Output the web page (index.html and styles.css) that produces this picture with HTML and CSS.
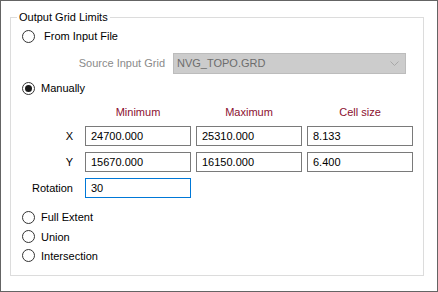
FILE: index.html
```html
<!DOCTYPE html>
<html>
<head>
<meta charset="utf-8">
<link rel="stylesheet" href="styles.css">
</head>
<body>
<div class="frame">
  <fieldset class="group">
    <legend class="legend">Output Grid Limits</legend>
    <div class="radio from-row"><span class="circle"></span><span class="rtext from-text">From Input File</span></div>
    <div class="source-row">
      <span class="source-label">Source Input Grid</span>
      <div class="combo"><span class="combo-text">NVG_TOPO.GRD</span>
        <svg class="chev" width="9" height="5" viewBox="0 0 9 5"><path d="M0.5 0.5 L4.5 4.5 L8.5 0.5" fill="none" stroke="#a8a8a8" stroke-width="1"/></svg>
      </div>
    </div>
    <div class="radio manual-row"><span class="circle checked"></span><span class="rtext">Manually</span></div>
    <div class="grid">
      <span></span><span class="hdr">Minimum</span><span class="hdr">Maximum</span><span class="hdr">Cell size</span>
      <span class="lbl">X</span><div class="input">24700.000</div><div class="input">25310.000</div><div class="input">8.133</div>
      <span class="lbl">Y</span><div class="input">15670.000</div><div class="input">16150.000</div><div class="input">6.400</div>
      <span class="lbl">Rotation</span><div class="input focus">30</div>
    </div>
    <div class="bottom-radios">
      <div class="radio r20"><span class="circle"></span><span class="rtext">Full Extent</span></div>
      <div class="radio r19"><span class="circle"></span><span class="rtext">Union</span></div>
      <div class="radio r19"><span class="circle"></span><span class="rtext">Intersection</span></div>
    </div>
  </fieldset>
</div>
</body>
</html>
```

FILE: styles.css
```css
html, body {
  margin: 0;
  padding: 0;
  background: #ffffff;
}
body {
  font-family: "Liberation Sans", Arial, sans-serif;
  font-size: 11px;
  color: #000000;
}
.frame {
  width: 438px;
  height: 292px;
  box-sizing: border-box;
  border: 1px solid #646464;
  padding: 9px 13px 0 9px;
  background: #ffffff;
}
.group {
  margin: 0;
  padding: 0 0 10px 6px;
  border: 1px solid #dcdcdc;
  width: 414px;
  box-sizing: border-box;
  min-width: 0;
}
.legend {
  padding: 0 2px;
  line-height: 14px;
  height: 14px;
  font-size: 11px;
}
.radio {
  display: flex;
  align-items: center;
  height: 20px;
  margin-left: 5px;
}
.circle {
  width: 13px;
  height: 13px;
  box-sizing: border-box;
  border: 1px solid #333333;
  border-radius: 50%;
  background: #ffffff;
  display: flex;
  align-items: center;
  justify-content: center;
  flex: none;
}
.circle.checked::after {
  content: "";
  width: 7px;
  height: 7px;
  border-radius: 50%;
  background: #1a1a1a;
}
.rtext {
  margin-left: 6px;
}
.from-text {
  margin-left: 9px;
}
.from-row {
  margin-top: 2px;
}
.source-row {
  display: flex;
  align-items: center;
  margin-top: 6px;
  height: 22px;
}
.source-label {
  width: 148px;
  text-align: right;
  color: #8a8a8a;
  margin-right: 8px;
}
.combo {
  width: 233px;
  height: 21px;
  box-sizing: border-box;
  background: #cccccc;
  border: 1px solid #bcbcbc;
  display: flex;
  align-items: center;
  justify-content: space-between;
  padding: 0 4px 0 3px;
  color: #6d6d6d;
}
.chev {
  display: block;
  margin-right: 2px;
}
.manual-row {
  margin-top: 4px;
}
.grid {
  display: grid;
  grid-template-columns: 69px 106px 106px 106px;
  column-gap: 5px;
  grid-template-rows: 16px 20px 20px 20px;
  row-gap: 6px;
  margin-top: 6px;
  margin-left: -6px;
}
.lbl {
  text-align: right;
  align-self: center;
  padding-right: 7px;
}
.hdr {
  text-align: center;
  color: #8b1030;
  align-self: center;
}
.input {
  box-sizing: border-box;
  height: 20px;
  border: 1px solid #7a7a7a;
  padding: 0 5px;
  display: flex;
  align-items: center;
  background: #ffffff;
}
.input.focus {
  border-color: #0078d7;
}
.bottom-radios {
  margin-top: 9px;
}
.r20 { height: 20px; }
.r19 { height: 19px; }
```
